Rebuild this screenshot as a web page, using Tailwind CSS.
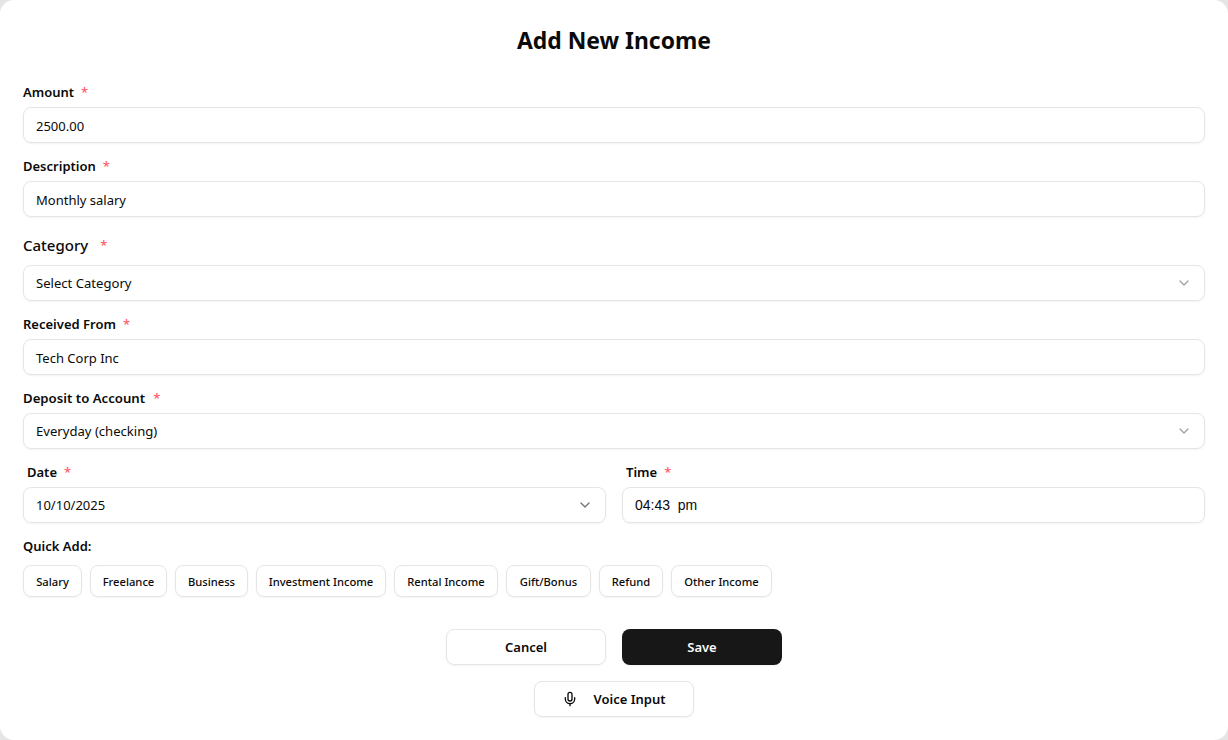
<!DOCTYPE html>
<html><head><meta charset="utf-8"><script src="https://cdn.jsdelivr.net/npm/@tailwindcss/browser@4"></script></head>
<body class="bg-[#e5e5e5]">
<div class="w-[1228px] h-[740px] bg-white rounded-[14px] overflow-hidden px-[23px] font-['Noto_Sans',sans-serif] text-[#0a0a0a] flex flex-col">
  <h2 class="text-center text-[22.9px] leading-[32px] font-bold mt-[25px] mb-[27px] text-[#0a0a0a]">Add New Income</h2>

  <div class="text-[13px] leading-[16px] font-semibold mb-[7px] flex gap-[7px]"><span>Amount</span><span class="text-[#ff5a68] font-medium">*</span></div>
  <div class="h-[36px] rounded-[8px] border border-[#e5e5e5] shadow-xs flex items-center px-3 pt-[4px] text-[13px] mb-[15px]">2500.00</div>

  <div class="text-[13px] leading-[16px] font-semibold mb-[7px] flex gap-[7px]"><span>Description</span><span class="text-[#ff5a68] font-medium">*</span></div>
  <div class="h-[36px] rounded-[8px] border border-[#e5e5e5] shadow-xs flex items-center px-3 pt-[4px] text-[13px] mb-[18px]">Monthly salary</div>

  <div class="text-[15px] leading-[20px] font-medium mb-[10px] flex gap-[12px]"><span>Category</span><span class="text-[#ff5a68] font-medium text-[13px]">*</span></div>
  <div class="h-[36px] rounded-[8px] border border-[#e5e5e5] shadow-xs flex items-center justify-between px-3 text-[13.1px] mb-[15px]"><span class="pt-[2px]">Select Category</span>
    <svg class="w-4 h-4 text-[#a8a29e]" viewBox="0 0 24 24" fill="none" stroke="currentColor" stroke-width="2" stroke-linecap="round" stroke-linejoin="round"><path d="m6 9 6 6 6-6"/></svg></div>

  <div class="text-[13px] leading-[16px] font-semibold mb-[7px] flex gap-[7px]"><span>Received From</span><span class="text-[#ff5a68] font-medium">*</span></div>
  <div class="h-[36px] rounded-[8px] border border-[#e5e5e5] shadow-xs flex items-center px-3 pt-[4px] text-[13px] mb-[15px]">Tech Corp Inc</div>

  <div class="text-[13.2px] leading-[16px] font-semibold mb-[7px] flex gap-[8px]"><span>Deposit to Account</span><span class="text-[#ff5a68] font-medium">*</span></div>
  <div class="h-[36px] rounded-[8px] border border-[#e5e5e5] shadow-xs flex items-center justify-between px-3 text-[13.1px] mb-[15px]"><span class="pt-[2px]">Everyday (checking)</span>
    <svg class="w-4 h-4 text-[#a8a29e]" viewBox="0 0 24 24" fill="none" stroke="currentColor" stroke-width="2" stroke-linecap="round" stroke-linejoin="round"><path d="m6 9 6 6 6-6"/></svg></div>

  <div class="grid grid-cols-2 gap-4 mb-[15px]">
    <div>
      <div class="text-[13px] leading-[16px] font-semibold mb-[7px] ml-1 flex gap-[7px]"><span>Date</span><span class="text-[#ff5a68] font-medium">*</span></div>
      <div class="h-[36px] rounded-[8px] border border-[#e5e5e5] shadow-xs flex items-center justify-between px-3 text-[13px]"><span class="pt-[2px]">10/10/2025</span>
        <svg class="w-4 h-4 text-[#737373]" viewBox="0 0 24 24" fill="none" stroke="currentColor" stroke-width="2" stroke-linecap="round" stroke-linejoin="round"><path d="m6 9 6 6 6-6"/></svg></div>
    </div>
    <div>
      <div class="text-[13px] leading-[16px] font-semibold mb-[7px] ml-1 flex gap-[7px]"><span>Time</span><span class="text-[#ff5a68] font-medium">*</span></div>
      <div class="h-[36px] rounded-[8px] border border-[#e5e5e5] shadow-xs flex items-center px-3 text-[14px] font-['Liberation_Sans',sans-serif] whitespace-pre">04:43  pm</div>
    </div>
  </div>

  <div class="text-[13px] leading-[16px] font-semibold mb-[11px]">Quick Add:</div>
  <div class="flex gap-2 mb-[32px]">
    <div class="w-[59px] h-[32px] rounded-[8px] border border-[#e5e5e5] shadow-xs flex items-center justify-center pt-[2px] text-[11.2px] font-medium">Salary</div>
    <div class="w-[77px] h-[32px] rounded-[8px] border border-[#e5e5e5] shadow-xs flex items-center justify-center pt-[2px] text-[11.2px] font-medium">Freelance</div>
    <div class="w-[73px] h-[32px] rounded-[8px] border border-[#e5e5e5] shadow-xs flex items-center justify-center pt-[2px] text-[11.2px] font-medium">Business</div>
    <div class="w-[130px] h-[32px] rounded-[8px] border border-[#e5e5e5] shadow-xs flex items-center justify-center pt-[2px] text-[11.2px] font-medium">Investment Income</div>
    <div class="w-[104px] h-[32px] rounded-[8px] border border-[#e5e5e5] shadow-xs flex items-center justify-center pt-[2px] text-[11.2px] font-medium">Rental Income</div>
    <div class="w-[85px] h-[32px] rounded-[8px] border border-[#e5e5e5] shadow-xs flex items-center justify-center pt-[2px] text-[11.2px] font-medium">Gift/Bonus</div>
    <div class="w-[64px] h-[32px] rounded-[8px] border border-[#e5e5e5] shadow-xs flex items-center justify-center pt-[2px] text-[11.2px] font-medium">Refund</div>
    <div class="w-[101px] h-[32px] rounded-[8px] border border-[#e5e5e5] shadow-xs flex items-center justify-center pt-[2px] text-[11.2px] font-medium">Other Income</div>
  </div>

  <div class="flex justify-center gap-4 mb-4">
    <div class="w-[160px] h-[36px] rounded-[8px] border border-[#e5e5e5] shadow-xs flex items-center justify-center pt-[2px] text-[13px] font-semibold">Cancel</div>
    <div class="w-[160px] h-[36px] rounded-[8px] bg-[#171717] text-[#fafafa] shadow-xs flex items-center justify-center pt-[2px] text-[13px] font-semibold">Save</div>
  </div>
  <div class="flex justify-center">
    <div class="w-[160px] h-[36px] rounded-[8px] border border-[#e5e5e5] shadow-xs flex items-center justify-center gap-[16px] text-[13px] font-semibold">
      <svg class="w-4 h-4 -ml-[1px]" viewBox="0 0 24 24" fill="none" stroke="currentColor" stroke-width="2" stroke-linecap="round" stroke-linejoin="round"><path d="M12 19v3"/><path d="M19 10v2a7 7 0 0 1-14 0v-2"/><rect x="9" y="2" width="6" height="13" rx="3"/></svg>
      <span class="pt-[2px]">Voice Input</span>
    </div>
  </div>
</div>
</body></html>
